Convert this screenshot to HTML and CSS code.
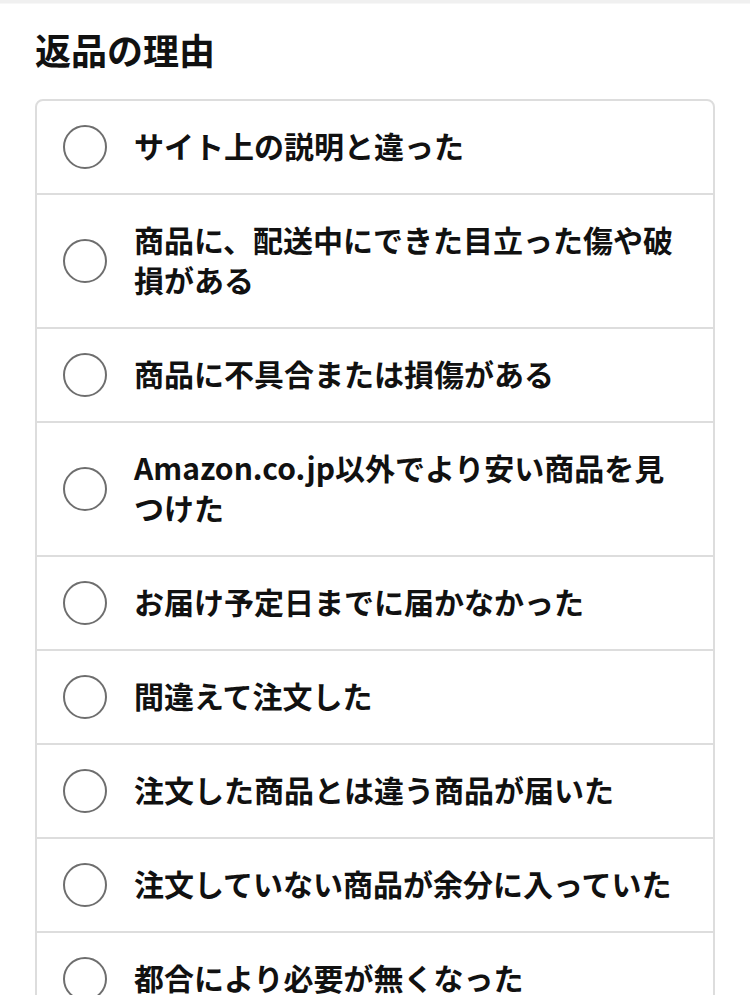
FILE: index.html
```html
<!DOCTYPE html>
<html lang="ja">
<head>
<meta charset="utf-8">
<title>返品の理由</title>
<link rel="stylesheet" href="styles.css">
</head>
<body>
<div class="topbar"></div>
<main class="page">
  <h1 class="title">返品の理由</h1>
  <ul class="options">
    <li class="option"><span class="radio"></span><span class="label">サイト上の説明と違った</span></li>
    <li class="option"><span class="radio"></span><span class="label">商品に、配送中にできた目立った傷や破損がある</span></li>
    <li class="option"><span class="radio"></span><span class="label">商品に不具合または損傷がある</span></li>
    <li class="option"><span class="radio"></span><span class="label">Amazon.co.jp以外でより安い商品を見つけた</span></li>
    <li class="option"><span class="radio"></span><span class="label">お届け予定日までに届かなかった</span></li>
    <li class="option"><span class="radio"></span><span class="label">間違えて注文した</span></li>
    <li class="option"><span class="radio"></span><span class="label">注文した商品とは違う商品が届いた</span></li>
    <li class="option"><span class="radio"></span><span class="label">注文していない商品が余分に入っていた</span></li>
    <li class="option"><span class="radio"></span><span class="label">都合により必要が無くなった</span></li>
  </ul>
</main>
</body>
</html>
```

FILE: styles.css
```css
html, body {
  margin: 0;
  padding: 0;
  background: #ffffff;
}
body {
  font-family: "Noto Sans CJK JP", "Noto Sans", "Liberation Sans", sans-serif;
  color: #111111;
}
.topbar {
  height: 3px;
  background: #f0f0f0;
  border-bottom: 1px solid #f7f7f7;
}
.page {
  padding: 0 35px;
}
.title {
  margin: 0;
  padding-top: 23px;
  font-size: 36px;
  line-height: 44px;
  font-weight: 700;
  letter-spacing: 0;
}
.options {
  list-style: none;
  margin: 28px 0 0 0;
  padding: 0;
  border: 2px solid #dddddd;
  border-radius: 8px;
}
.option {
  display: flex;
  align-items: center;
  gap: 27px;
  padding: 24px 26px;
  border-bottom: 2px solid #dddddd;
}
.option:last-child {
  border-bottom: none;
}
.radio {
  flex: 0 0 auto;
  box-sizing: border-box;
  width: 44px;
  height: 44px;
  border: 2px solid #6e6e6e;
  border-radius: 50%;
}
.label {
  flex: 1 1 auto;
  padding: 0 0 4px 0;
  font-size: 30px;
  line-height: 40px;
  font-weight: 700;
}
```
